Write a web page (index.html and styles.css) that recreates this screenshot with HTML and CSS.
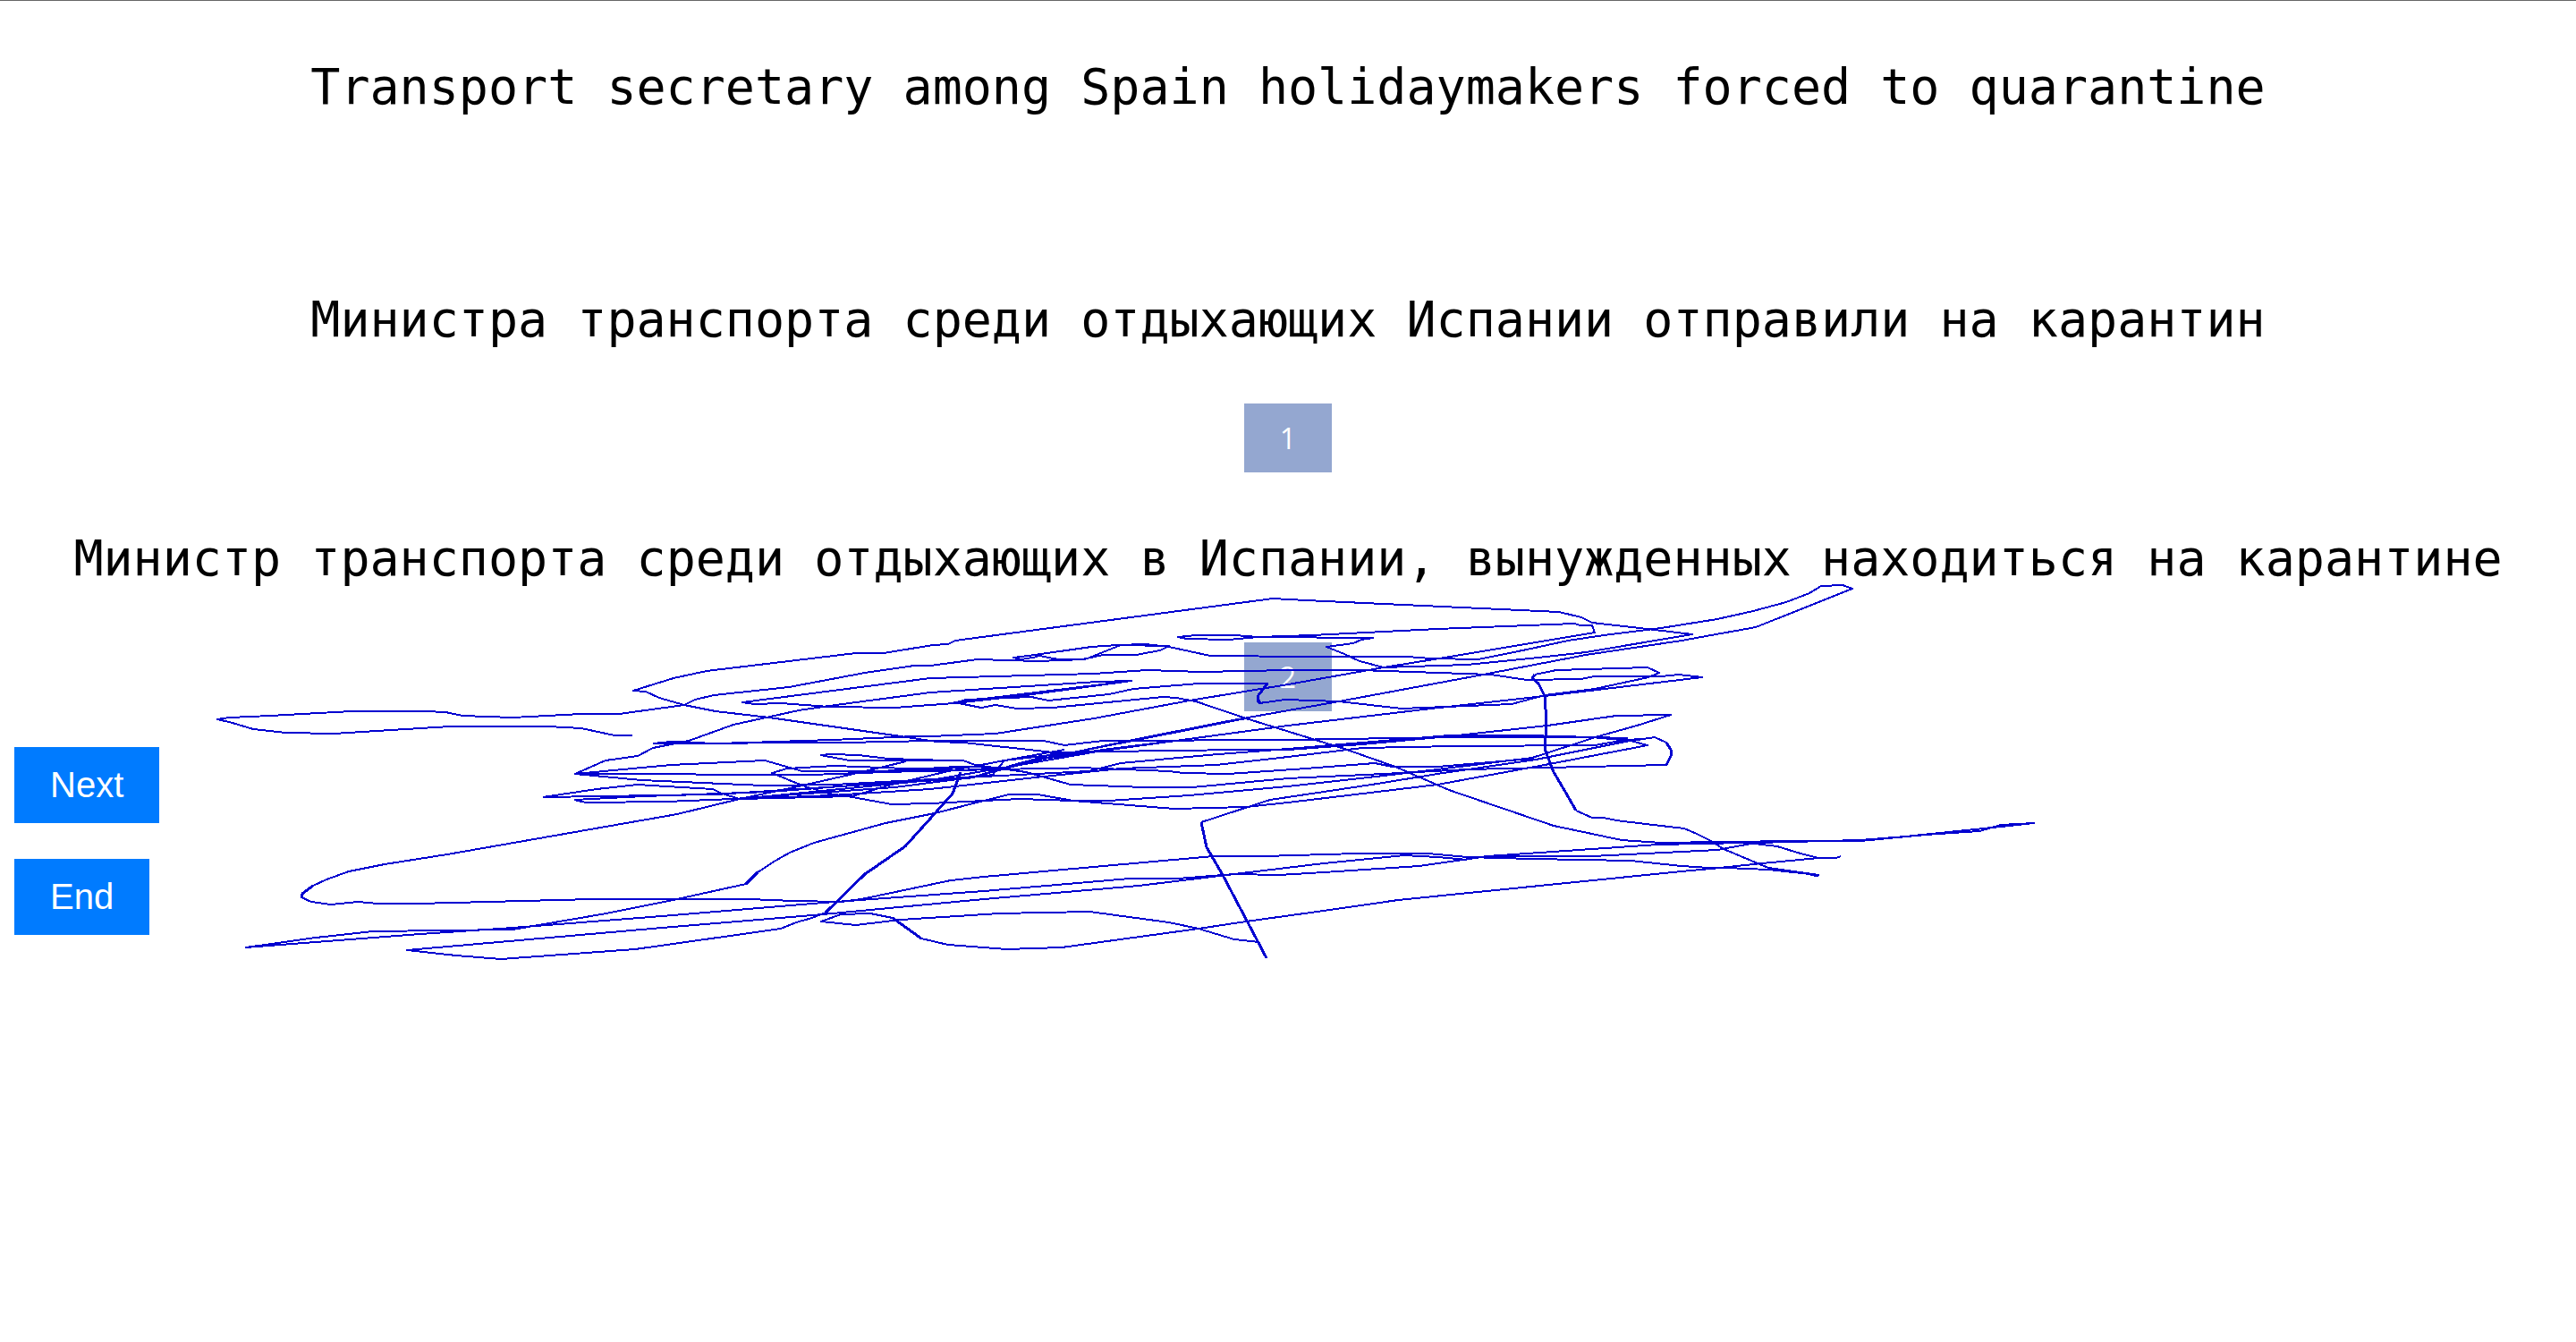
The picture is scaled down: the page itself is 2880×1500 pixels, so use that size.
FILE: index.html
```html
<!DOCTYPE html>
<html lang="ru">
<head>
<meta charset="utf-8">
<title>Translations</title>
<link rel="stylesheet" href="styles.css">
</head>
<body>
<main class="page">
  <p class="phrase source" lang="en">Transport secretary among Spain holidaymakers forced to quarantine</p>
  <section class="option">
    <p class="phrase">Министра транспорта среди отдыхающих Испании отправили на карантин</p>
    <button class="choice" type="button">1</button>
  </section>
  <section class="option">
    <p class="phrase">Министр транспорта среди отдыхающих в Испании, вынужденных находиться на карантине</p>
    <button class="choice" type="button">2</button>
  </section>
  <nav class="actions">
    <button class="action" type="button">Next</button>
    <button class="action" type="button">End</button>
  </nav>
</main>
<svg class="trace" viewBox="0 0 2880 1500" aria-hidden="true">
  <!-- upper loops -->
  <polyline points="707,822 687,822 650,814 613,812 503,812 437,816 373,820 320,819 283,815 260,808 243,804 257,802 302,800 393,795 475,795 498,796 517,800 573,802 650,798 692,798 765,788 777,782 798,777 882,768 967,752 1022,744 1040,744 1093,737 1160,739 1213,737 1253,721 1307,722 1297,727 1270,732 1233,732 1210,737 1183,737 1157,732 1133,735 1157,732 1220,723 1250,721 1280,720 1307,723 1353,733 1460,734 1573,734 1600,736 1653,737 1707,726 1753,716 1793,710 1857,702 1920,692 1960,683 1997,673 2023,663 2036,655 2060,654 2071,658 1963,701 1880,716 1773,732 1653,755 1497,784 1373,806 1307,819 1257,829 1200,841 1140,853 1083,870 1000,875 800,888 607,891"/>
  <polyline points="1133,735 1142,737 1160,734"/>
  <polyline points="730,831 750,829 800,831 837,830 930,827 1023,823 1040,823 1113,820 1223,803 1330,783 1440,765 1547,746 1603,737 1783,707 1780,699 1767,699 1760,697 1607,703 1467,710 1407,712 1373,715 1327,714 1317,712 1337,710 1380,710 1407,712 1535,713 1522,715 1513,719 1483,723 1503,731 1520,739 1547,746 1640,743 1720,735 1773,729 1892,709 1833,702 1780,696 1768,690 1743,684 1460,671 1423,669 1068,716 1060,720 1043,721 988,730 957,730 790,750 753,758 708,772 722,773 737,780 765,788 800,795 860,802 1007,823 1047,829 1077,830 1123,835 1177,841 1227,840 1320,839 1380,838 1440,838 1523,832 1620,823 1730,811 1807,800 1868,799 1830,811 1787,823 1713,847 1607,860 1547,867 1440,879 1330,889 1240,895 1200,895 1160,888 1128,888 1100,895 1045,909 990,920 910,942 883,953 867,962 847,975 834,988 757,1005 678,1021 573,1039 417,1041 353,1048 275,1059 353,1053 470,1044 573,1037 740,1024 920,1009 1100,996 1263,982 1317,982 1380,977 1480,965 1570,956 1607,958 1640,961"/>
  <polyline points="1727,778 1903,757 1877,754 1857,756 1783,756 1767,759 1707,760 1667,754 1520,749 1440,749 1343,751 1283,749 1223,753 1040,758 830,785 843,787 873,786 927,790 1000,791 1067,786 1140,778 1265,761 1227,762 1040,774 927,789 893,794 820,810 770,828 730,836 713,845 677,850 643,865 750,855 855,850 897,862 990,862 1060,859"/>
  <polyline points="1265,761 1067,785 1097,791 1113,788 1137,792 1177,791 1300,779 1315,780 1337,784 1393,803 1503,837 1560,857 1620,883 1737,923 1813,939 1857,942 1923,941 2013,940 2080,940 2153,933 2213,929 2237,922 2274,920 2237,924 2130,935 2080,939 1963,942 1920,950 1880,952 1780,957 1663,957"/>
  <polyline points="1067,786 1080,782 1153,779 1172,783 1240,776 1267,770 1340,764 1417,764 1407,777 1408,786 1437,782 1497,784 1567,792 1690,787 1727,777 1783,770 1843,757 1855,752 1842,746 1740,749 1716,754"/>
  <!-- dense middle band -->
  <polyline points="1903,757 1727,778 1600,792 1440,811 1307,829 1227,840 1123,858 1040,872 960,880 827,893"/>
  <polyline points="730,831 944,830 1040,828 1167,828 1190,833 1233,828 1440,827 1620,824 1780,824 1823,828 1842,833 1727,855 1607,877 1440,897 1393,902 1313,904 1200,895 1140,893 1040,898 997,899 953,891 927,887 897,878 863,864 880,859 933,856 1040,860 1090,857"/>
  <polyline points="643,865 907,866 990,863 1100,860 1183,859 1207,858 1307,862 1323,864 1373,865 1460,859 1537,853 1557,857 1607,857 1713,848"/>
  <polyline points="643,865 717,872 853,878 933,877 1060,870 1217,862 1253,853 1350,844 1440,837 1523,830 1620,822 1708,822 1780,824 1820,825"/>
  <polyline points="607,891 667,882 713,877 745,879 797,882 807,887 827,893 953,890 993,878 1060,862 1123,850 1200,841 1307,820 1393,803"/>
  <polyline points="642,894 655,897 745,896 820,893 1000,880 1110,866 1123,850 1190,838"/>
  <polyline points="642,894 720,890 860,885 980,876 1090,868 1167,848 1233,838 1330,826"/>
  <polyline points="827,893 930,889 1040,882 1167,868 1253,859 1360,855 1440,846 1523,836 1627,834 1783,833 1817,827 1838,826"/>
  <polyline points="917,844 950,850 1077,850 1090,855 1147,863 1197,877 1280,880 1333,880 1440,870 1547,865 1640,860 1863,855 1868,845 1868,838 1863,830 1850,824 1817,829 1717,849 1607,865 1540,876 1420,894 1343,919"/>
  <polyline points="917,844 930,843 960,844 993,848 1060,850"/>
  <polyline points="985,862 1070,857 1123,858 1180,842"/>
  <polyline points="940,862 1040,862 1110,860"/>
  <!-- long lower sweeps -->
  <polyline points="1762,906 1780,914 1793,914 1807,917 1840,921 1883,926 1897,932 1913,940 1927,949 1977,970 2033,978 1977,972 1930,970 1910,970 1880,968 1823,962 1713,960 1640,958 1597,954 1517,954 1413,957 1357,957 1200,971 1100,980 1063,984 963,1005 940,1008 887,1007 837,1005 663,1005 467,1010 423,1010 400,1008 370,1011 348,1008 337,1003 338,999 350,990 365,983 390,974 430,966 500,955 740,913 757,910 827,893 897,878 963,863 1013,851"/>
  <polyline points="923,1020 908,1026 890,1031 873,1038 710,1061 560,1072 510,1068 455,1062 740,1037 920,1022 1100,1005 1273,990 1380,977 1430,978 1480,975 1587,968 1663,957 1853,944 1953,942 1987,946 2013,954 2033,959 2053,959 2058,957"/>
  <polyline points="2033,959 1970,965 1913,971 1880,974 1563,1006 1480,1018 1393,1030 1340,1038 1187,1059 1125,1061 1060,1056 1030,1049"/>
  <polyline points="998,1026 973,1021 940,1022 918,1030 957,1034 1007,1028 1117,1021 1218,1019 1307,1031 1340,1038 1380,1050 1407,1053"/>
  <!-- steep, heavier segments -->
  <g class="heavy">
    <polyline points="1716,754 1713,758 1720,764 1727,778 1729,807 1727,837 1737,863 1750,885 1762,906"/>
    <polyline points="1417,764 1407,777 1406,783 1409,786"/>
    <polyline points="1074,863 1065,887 1040,915 1012,946 967,977 923,1020"/>
    <polyline points="1343,919 1349,947 1367,978 1405,1050 1416,1071"/>
    <polyline points="998,1026 1030,1049"/>
    <polyline points="847,975 834,988"/>
    <polyline points="350,990 338,999 337,1004"/>
    <polyline points="1863,830 1868,838 1868,845 1863,855"/>
    <polyline points="2024,977 2033,979"/>
  </g>
</svg>
</body>
</html>
```
FILE: styles.css
```css
* {
  box-sizing: border-box;
}

body {
  position: relative;
  margin: 0;
  border-top: 1px solid #666;
  background: #fff;
  color: #000;
}

.page {
  display: flex;
  flex-direction: column;
  padding: 58px 16px;
}

.phrase {
  margin: 0;
  font: 55px/76px "DejaVu Sans Mono", monospace;
  text-align: center;
  white-space: nowrap;
}

.source {
  margin-bottom: 184px;
}

.option {
  display: flex;
  flex-direction: column;
  align-items: center;
  gap: 56px;
  margin-bottom: 58px;
}

.choice,
.action {
  border: 0;
  color: #fff;
}

.choice {
  padding: 16px 40px;
  background: #94a7d0;
  font: 32px/45px "Open Sans", sans-serif;
}

.actions {
  display: flex;
  flex-direction: column;
  align-items: flex-start;
  gap: 40px;
  margin-top: -18px;
}

.action {
  padding: 20px 40px;
  background: #007bff;
  font: 40px/45px "Liberation Sans", Arial, sans-serif;
}

.trace {
  position: absolute;
  top: -1px;
  left: 0;
  width: 100%;
  pointer-events: none;
  fill: none;
  stroke: #0000d0;
  stroke-width: 2px;
  stroke-linejoin: round;
  shape-rendering: crispEdges;
}

.heavy {
  stroke-width: 3px;
}
```
